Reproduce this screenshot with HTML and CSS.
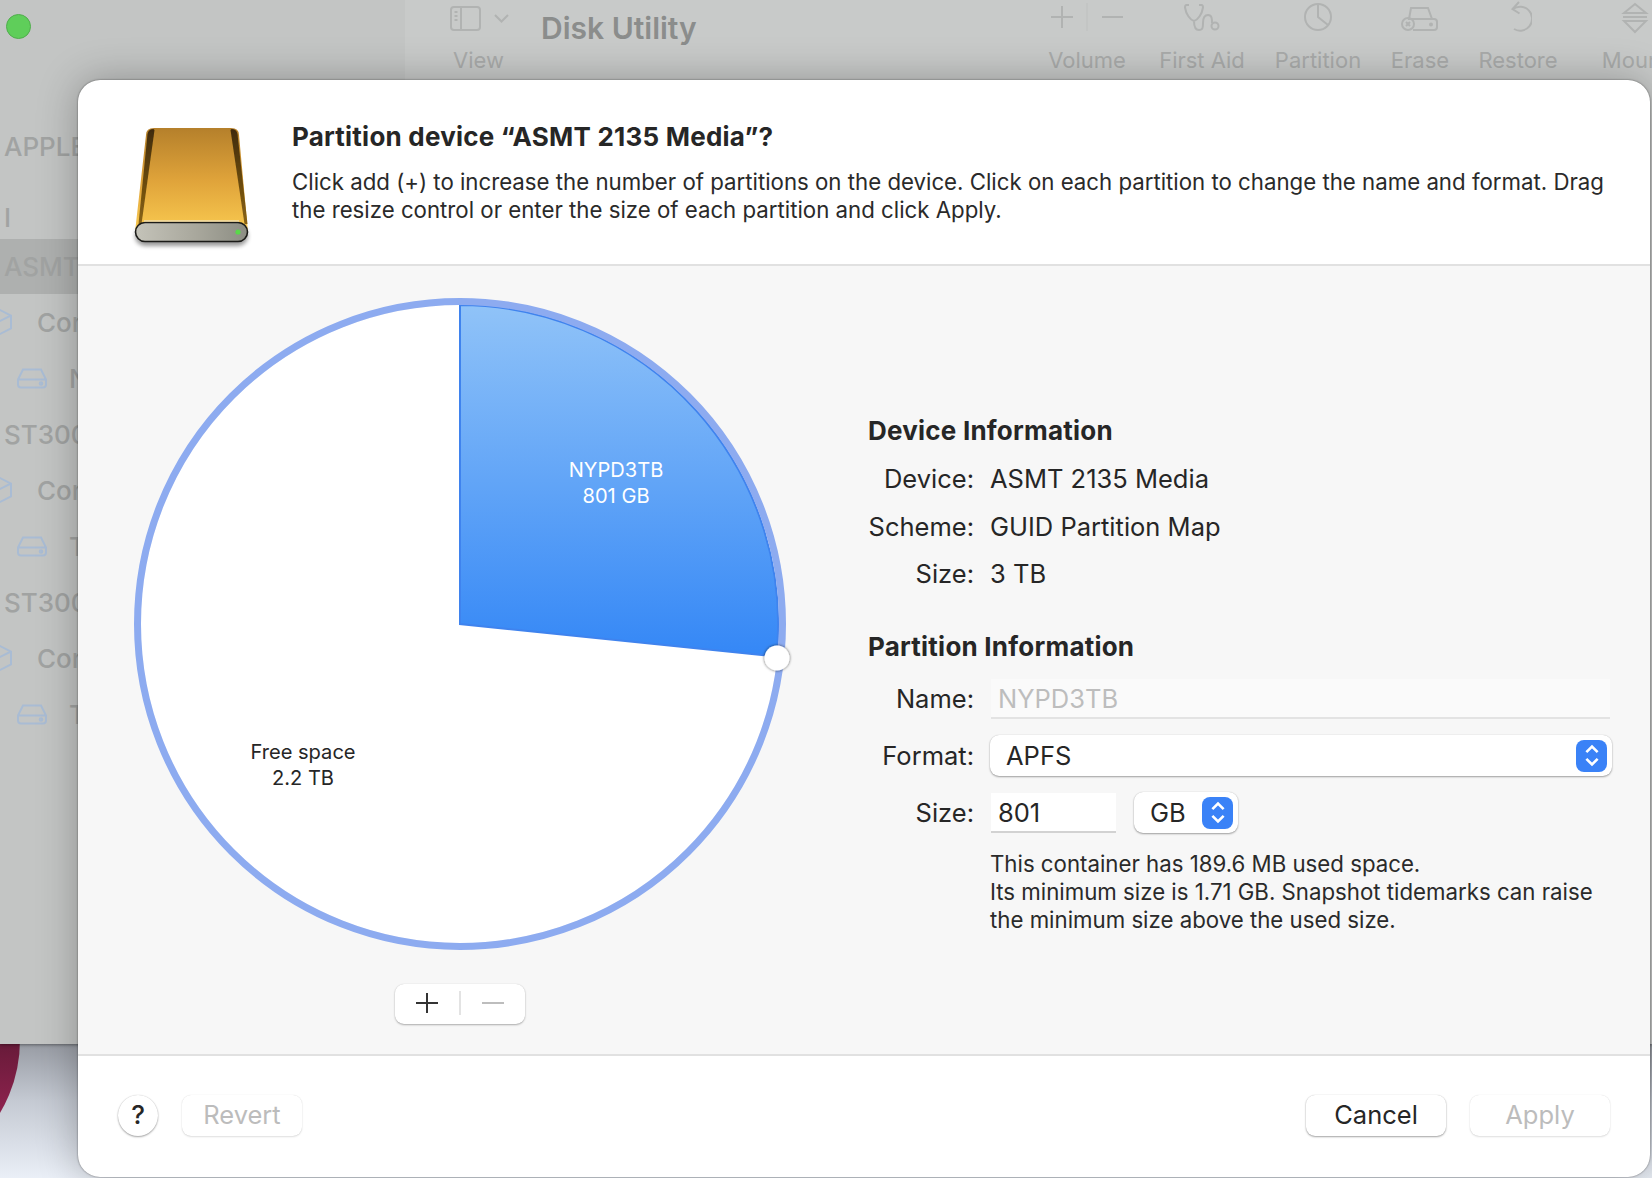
FILE: index.html
```html
<!DOCTYPE html>
<html lang="en">
<head>
<meta charset="utf-8">
<title>Disk Utility</title>
<link rel="stylesheet" href="styles.css">
</head>
<body>
<div class="wallpaper-disc"></div>
<div class="window">
  <aside class="sidebar">
    <div class="traffic"></div>
    <ul class="side-list">
      <li class="side-row side-row-apple">APPLE</li>
      <li class="side-row side-row-i">I</li>
      <li class="side-row side-row-active">ASMT</li>
      <li class="side-row side-con"><svg class="cube" viewBox="0 0 28 28"><path d="M14 1l13 6.500v13L14 27 1 20.500v-13zM1 7.500L14 14l13-6.500M14 14v13"/></svg>Con</li>
      <li class="side-row side-vol"><svg class="disk" viewBox="0 0 30 21"><path d="M6 1.500h18l5 10v5a3 3 0 0 1-3 3H4a3 3 0 0 1-3-3v-5zM1 11.500h28"/><circle cx="24" cy="15.500" r="1.300"/></svg>N</li>
      <li class="side-row">ST300</li>
      <li class="side-row side-con"><svg class="cube" viewBox="0 0 28 28"><path d="M14 1l13 6.500v13L14 27 1 20.500v-13zM1 7.500L14 14l13-6.500M14 14v13"/></svg>Con</li>
      <li class="side-row side-vol"><svg class="disk" viewBox="0 0 30 21"><path d="M6 1.500h18l5 10v5a3 3 0 0 1-3 3H4a3 3 0 0 1-3-3v-5zM1 11.500h28"/><circle cx="24" cy="15.500" r="1.300"/></svg>T</li>
      <li class="side-row">ST300</li>
      <li class="side-row side-con"><svg class="cube" viewBox="0 0 28 28"><path d="M14 1l13 6.500v13L14 27 1 20.500v-13zM1 7.500L14 14l13-6.500M14 14v13"/></svg>Con</li>
      <li class="side-row side-vol"><svg class="disk" viewBox="0 0 30 21"><path d="M6 1.500h18l5 10v5a3 3 0 0 1-3 3H4a3 3 0 0 1-3-3v-5zM1 11.500h28"/><circle cx="24" cy="15.500" r="1.300"/></svg>T</li>
    </ul>
  </aside>
  <header class="toolbar">
    <div class="tool tool-view">
      <svg class="ticon" width="60" height="36" viewBox="0 0 60 36"><rect x="1" y="7" width="29" height="23" rx="3"/><path d="M11 7v23M4.500 12h3M4.500 16h3M4.500 20h3M45 15l6.500 6.500L58 15"/></svg>
      <span class="tool-label">View</span>
    </div>
    <h1 class="app-title">Disk Utility</h1>
    <div class="tool tool-volume">
      <svg class="ticon" width="78" height="36" viewBox="0 0 78 36"><path d="M14 6v22M3 17h22M54 17h21"/><path class="tdivider" d="M39 3v28"/></svg>
      <span class="tool-label">Volume</span>
    </div>
    <div class="tool tool-aid">
      <svg class="ticon" width="38" height="36" viewBox="0 0 38 36"><path d="M6 5H3.500C2 5 2 6.500 2 7.500 3 14 7 20 11 21c4-1 8-7 9-13.500 0-1 0-2.500-1.500-2.500H16M11 21c0 5 1 9 5 9s4-3 4-7 1-8 5-8 4 4 4 8"/><circle cx="32" cy="26" r="3.500"/></svg>
      <span class="tool-label">First Aid</span>
    </div>
    <div class="tool tool-part">
      <svg class="ticon" width="30" height="36" viewBox="0 0 30 36"><circle cx="15" cy="17" r="13"/><path d="M15 4v13l10 8"/></svg>
      <span class="tool-label">Partition</span>
    </div>
    <div class="tool tool-erase">
      <svg class="ticon" width="38" height="36" viewBox="0 0 38 36"><path d="M10 8h17l4 11H8zM8 19h25a3 3 0 0 1 3 3v5a3 3 0 0 1-3 3H12"/><circle cx="7" cy="24" r="6"/><path d="M5 22l4 4M9 22l-4 4"/><circle cx="30" cy="24.500" r="1"/></svg>
      <span class="tool-label">Erase</span>
    </div>
    <div class="tool tool-restore">
      <svg class="ticon" width="28" height="36" viewBox="0 0 28 36"><path d="M9 9a12 12 0 1 1 1 20M15 2L8.500 9l7 4.500"/></svg>
      <span class="tool-label">Restore</span>
    </div>
    <div class="tool tool-mount">
      <svg class="ticon" width="30" height="36" viewBox="0 0 30 36"><path d="M15 4l11 9H4zM3 17h24M15 32l11-11H4z"/></svg>
      <span class="tool-label">Mount</span>
    </div>
  </header>
</div>

<section class="sheet">
  <div class="sheet-head">
    <svg class="drive" width="130" height="130" viewBox="0 0 130 130">
      <defs>
        <linearGradient id="gold" x1="0" y1="0" x2="0" y2="1">
          <stop offset="0" stop-color="#b5802b"/>
          <stop offset="0.5" stop-color="#dfa33a"/>
          <stop offset="1" stop-color="#f9ca50"/>
        </linearGradient>
        <linearGradient id="edgeL" gradientUnits="userSpaceOnUse" x1="0" y1="6" x2="0" y2="105">
          <stop offset="0" stop-color="#3f2a08"/>
          <stop offset="0.6" stop-color="#6e4d10"/>
          <stop offset="1" stop-color="#8a6414"/>
        </linearGradient>
        <linearGradient id="bezel" x1="0" y1="0" x2="1" y2="0">
          <stop offset="0" stop-color="#c4c3b9"/>
          <stop offset="0.55" stop-color="#a8a79c"/>
          <stop offset="1" stop-color="#8c8d83"/>
        </linearGradient>
        <filter id="driveShadow" x="-10%" y="-30%" width="120%" height="180%"><feGaussianBlur stdDeviation="2"/></filter>
        <filter id="edgeBlur" x="-30%" y="-5%" width="160%" height="110%"><feGaussianBlur stdDeviation="0.700"/></filter>
      </defs>
      <rect x="7" y="104" width="113" height="20" rx="10" fill="#000" opacity=".4" filter="url(#driveShadow)"/>
      <path d="M18 13q0-7 8-7h77q8 0 8 7l9 97H7z" fill="url(#gold)"/>
      <path d="M19.500 12q1-5 6-5l1 1-13 94h-3z" fill="url(#edgeL)" filter="url(#edgeBlur)"/>
      <path d="M109.500 12q-1-5-6-5l-1 1 14 94h3z" fill="url(#edgeL)" filter="url(#edgeBlur)"/>
      <rect x="7.500" y="100.500" width="112" height="19" rx="9.500" fill="url(#bezel)" stroke="#1b1b18" stroke-width="1.600"/>
      <path d="M16 99h95" stroke="#f1eee0" stroke-width="1.200"/>
      <circle cx="110" cy="110" r="2.600" fill="#59d84a"/>
    </svg>
    <div class="head-text">
      <h2 class="sheet-title">Partition device “ASMT 2135 Media”?</h2>
      <p class="sheet-desc">Click add (+) to increase the number of partitions on the device. Click on each partition to change the name and format. Drag the resize control or enter the size of each partition and click Apply.</p>
    </div>
  </div>

  <div class="sheet-main">
    <div class="pie-col">
      <svg class="pie" width="670" height="670" viewBox="0 0 670 670">
        <defs>
          <linearGradient id="slice" x1="0" y1="0" x2="0" y2="1">
            <stop offset="0" stop-color="#90c3f8"/>
            <stop offset="1" stop-color="#3487f6"/>
          </linearGradient>
          <filter id="knobShadow" x="-50%" y="-50%" width="200%" height="200%"><feDropShadow dx="0" dy="0" stdDeviation="1.500" flood-color="#000" flood-opacity=".7"/></filter>
        </defs>
        <circle cx="335" cy="335" r="319" fill="#fff"/>
        <path class="slice" d="M335 335V16A319 319 0 0 1 651.500 367.500Z" fill="url(#slice)"/>
        <circle class="ring" cx="335" cy="335" r="322.500"/>
        <circle class="knob" cx="652" cy="369" r="12.500" filter="url(#knobShadow)"/>
        <text class="pie-label pie-label-light" x="491" y="188">NYPD3TB</text>
        <text class="pie-label pie-label-light" x="491" y="214">801 GB</text>
        <text class="pie-label" x="178" y="470">Free space</text>
        <text class="pie-label" x="178" y="496">2.2 TB</text>
      </svg>
      <div class="stepper-group">
        <svg class="glyph" width="22" height="22" viewBox="0 0 22 22"><path d="M11 1v20M0 11h22"/></svg>
        <span class="group-sep"></span>
        <svg class="glyph glyph-off" width="22" height="22" viewBox="0 0 22 22"><path d="M0 11h22"/></svg>
      </div>
    </div>

    <div class="info-col">
      <h3 class="info-head">Device Information</h3>
      <dl class="kv">
        <dt>Device:</dt><dd>ASMT 2135 Media</dd>
        <dt>Scheme:</dt><dd>GUID Partition Map</dd>
        <dt>Size:</dt><dd>3 TB</dd>
      </dl>
      <h3 class="info-head info-head-2">Partition Information</h3>
      <div class="form">
        <label class="form-label">Name:</label>
        <div class="field field-disabled">NYPD3TB</div>
        <label class="form-label">Format:</label>
        <div class="popup popup-wide">APFS
          <span class="updown"><svg width="18" height="27" viewBox="0 0 16 24"><path d="M3 9l5-5 5 5M3 15l5 5 5-5"/></svg></span>
        </div>
        <label class="form-label">Size:</label>
        <div class="size-row">
          <div class="field field-size">801</div>
          <div class="popup popup-unit">GB
            <span class="updown"><svg width="18" height="27" viewBox="0 0 16 24"><path d="M3 9l5-5 5 5M3 15l5 5 5-5"/></svg></span>
          </div>
        </div>
        <p class="note">This container has 189.6 MB used space.<br>Its minimum size is 1.71 GB. Snapshot tidemarks can raise the minimum size above the used size.</p>
      </div>
    </div>
  </div>

  <div class="sheet-foot">
    <button class="help">?</button>
    <button class="btn btn-revert btn-off">Revert</button>
    <span class="foot-spacer"></span>
    <button class="btn btn-wide">Cancel</button>
    <button class="btn btn-wide btn-off">Apply</button>
  </div>
</section>
</body>
</html>
```
FILE: styles.css
```css
* { box-sizing: border-box; }

html, body {
  margin: 0;
  height: 100%;
}

body {
  width: 1652px;
  height: 1178px;
  overflow: hidden;
  position: relative;
  font-family: Inter, "Liberation Sans", sans-serif;
  background: linear-gradient(180deg, #989ca4 0%, #989ca4 88.600%, #c5cad3 93.500%, #eaeff7 100%);
  color: #262626;
}

.wallpaper-disc {
  position: absolute;
  left: -266px;
  top: 897px;
  width: 286px;
  height: 286px;
  border-radius: 50%;
  background: linear-gradient(180deg, #661a38 50%, #952452 80%);
}

/* background window */
.window {
  position: relative;
  width: 1652px;
  height: 1044px;
  display: flex;
  background: #c8cac9;
  box-shadow: 0 1px 3px rgba(0, 0, 0, .4);
  overflow: hidden;
}

.sidebar {
  width: 405px;
  flex: none;
  padding-top: 14px;
  background: #c3c5c4;
  font-size: 26px;
  font-weight: 500;
  color: #a1a3a2;
}

.traffic {
  width: 25px;
  height: 25px;
  margin-left: 6px;
  border-radius: 50%;
  background: #5fce5a;
  border: 1px solid #50ad4c;
}

.side-list {
  list-style: none;
  margin: 0;
  padding: 82px 0 0;
}

.side-row {
  height: 56px;
  padding-left: 4px;
  display: flex;
  align-items: center;
  white-space: nowrap;
}

.side-row-apple { height: 72px; margin-top: -11px; }
.side-row-i { height: 72px; margin-top: -2px; padding-top: 2px; }
.side-row-active { height: 55px; margin-top: -13px; background: #aeb0af; }

.side-con svg { margin-left: -20px; margin-right: 25px; }
.side-vol { padding-left: 17px; }
.side-vol svg { margin-right: 22px; }

.cube, .disk {
  flex: none;
  fill: none;
  stroke: #a9bcd4;
  stroke-width: 2;
}
.cube { width: 28px; height: 28px; }
.disk { width: 30px; height: 21px; }

.toolbar {
  flex: 1;
  height: 80px;
  display: flex;
  align-items: flex-start;
  color: #a9abaa;
  overflow: hidden;
}

.tool {
  flex: none;
  display: flex;
  flex-direction: column;
  align-items: center;
}

.ticon {
  flex: none;
  fill: none;
  stroke: #b1b3b2;
  stroke-width: 2;
  display: block;
}

.tdivider { stroke: #bec0bf; stroke-width: 1; }

.tool-label {
  margin-top: 11px;
  font-size: 22px;
  line-height: 26px;
  white-space: nowrap;
}

.tool-view { width: 60px; margin-left: 45px; align-items: flex-start; }
.tool-view .tool-label { margin-left: 3px; }
.tool-volume { width: 78px; margin-left: 352px; }
.tool-aid { width: 86px; margin-left: 33px; }
.tool-part { width: 88px; margin-left: 29px; }
.tool-erase { width: 60px; margin-left: 28px; }
.tool-restore { width: 80px; margin-left: 28px; }
.tool-mount { width: 70px; margin-left: 42px; }

.app-title {
  flex: none;
  margin: 10px 0 0 31px;
  width: 155px;
  font-size: 30px;
  line-height: 36px;
  font-weight: 600;
  color: #8b8d8c;
  white-space: nowrap;
}

/* sheet */
.sheet {
  position: absolute;
  left: 78px;
  top: 80px;
  width: 1572px;
  height: 1097px;
  border-radius: 22px;
  background: #fff;
  box-shadow: 0 0 2px rgba(0, 0, 0, .55), 0 0 40px rgba(0, 0, 0, .28);
  display: flex;
  flex-direction: column;
  overflow: hidden;
}

.sheet-head {
  flex: none;
  height: 186px;
  padding: 38px 40px 0 50px;
  display: flex;
  align-items: flex-start;
  border-bottom: 2px solid #e1e1e1;
}

.drive { flex: none; margin-right: 34px; margin-top: 4px; margin-left: 0; }

.head-text { flex: 1; padding-top: 1px; }

.sheet-title {
  margin: 0;
  font-size: 26px;
  line-height: 36px;
  font-weight: 700;
  letter-spacing: .22px;
  color: #262626;
}

.sheet-desc {
  margin: 13px 0 0;
  font-size: 22.240px;
  line-height: 28px;
  color: #2a2a2a;
}

.sheet-main {
  flex: none;
  height: 788px;
  background: #f7f7f7;
  display: flex;
}

.pie-col {
  flex: none;
  width: 764px;
  padding-top: 23px;
  display: flex;
  flex-direction: column;
  align-items: center;
}

.pie { flex: none; display: block; }

.ring {
  fill: none;
  stroke: #8dabf0;
  stroke-width: 7;
}

.slice {
  stroke: #3f83ee;
  stroke-width: 2;
}

.knob { fill: #fff; }

.pie-label {
  font-size: 20.100px;
  text-anchor: middle;
  fill: #262626;
}
.pie-label-light { fill: #fff; }

.stepper-group {
  flex: none;
  margin-top: 25px;
  width: 130px;
  height: 40px;
  border-radius: 9px;
  background: #fff;
  box-shadow: 0 1px 2px rgba(0, 0, 0, .3), 0 0 1px rgba(0, 0, 0, .15);
  display: flex;
  align-items: center;
  padding: 0 0 3px 21px;
}

.glyph {
  flex: none;
  fill: none;
  stroke: #333;
  stroke-width: 2;
}
.glyph-off { stroke: #bdbdbd; }

.group-sep {
  flex: none;
  width: 2px;
  height: 24px;
  margin: 0 21px 0 21px;
  background: #e3e3e3;
}

.info-col {
  flex: 1;
  padding: 0 38px 0 26px;
}

.info-head {
  margin: 147px 0 0;
  font-size: 26px;
  line-height: 36px;
  font-weight: 700;
  letter-spacing: .22px;
  color: #262626;
}

.info-head-2 { margin-top: 37px; }

.kv {
  margin: 12px 0 0;
  display: grid;
  grid-template-columns: 106px 1fr;
  column-gap: 16px;
  row-gap: 11.500px;
  font-size: 25.500px;
  line-height: 36px;
}

.kv dt { text-align: right; }
.kv dd { margin: 0; }

.form {
  margin-top: 14px;
  display: grid;
  grid-template-columns: 106px 621px;
  column-gap: 16px;
  font-size: 25.500px;
  line-height: 36px;
}

.form-label { text-align: right; align-self: center; }

.field {
  height: 40px;
  padding: 2px 7px 0;
  background: #fff;
  border-bottom: 2px solid #d2d2d2;
  display: flex;
  align-items: center;
  margin-left: 1px;
}

.field-disabled {
  width: 619px;
  background: #fafafa;
  border-bottom-color: #e3e3e3;
  color: #bdbdbd;
}

.field-size { width: 125px; }

.popup {
  height: 41px;
  background: #fff;
  border-radius: 9px;
  box-shadow: 0 1px 2px rgba(0, 0, 0, .35), 0 0 1px rgba(0, 0, 0, .2);
  display: flex;
  align-items: center;
  justify-content: space-between;
  padding: 0 5px 0 16px;
}

.popup-wide { margin: 16px 0 16px; width: 622px; }

.size-row {
  display: flex;
  align-items: center;
  gap: 18px;
}

.popup-unit { width: 104px; }

.updown {
  flex: none;
  width: 31px;
  height: 32px;
  border-radius: 8px;
  background: #3a82f7;
  display: flex;
  align-items: center;
  justify-content: center;
}

.updown svg {
  fill: none;
  stroke: #fff;
  stroke-width: 2.300;
}

.note {
  grid-column: 2;
  margin: 17px 0 0;
  font-size: 22.240px;
  line-height: 28px;
  color: #2a2a2a;
}

.sheet-foot {
  flex: 1;
  border-top: 2px solid #e1e1e1;
  display: flex;
  align-items: center;
  padding: 0 40px 2px 40px;
}

.foot-spacer { flex: 1; }

button {
  font-family: inherit;
  border: 0;
  padding: 0 0 2px;
  background: #fff;
  color: #262626;
}

.help {
  width: 40px;
  height: 41px;
  border-radius: 50%;
  font-size: 26px;
  font-weight: 500;
  box-shadow: 0 1px 2px rgba(0, 0, 0, .35), 0 0 1px rgba(0, 0, 0, .2);
}

.btn {
  height: 41px;
  border-radius: 9px;
  font-size: 25.500px;
  box-shadow: 0 1px 2px rgba(0, 0, 0, .35), 0 0 1px rgba(0, 0, 0, .2);
}

.btn-off {
  color: #bcbcbc;
  box-shadow: 0 1px 2px rgba(0, 0, 0, .12), 0 0 1px rgba(0, 0, 0, .15);
}

.btn-revert { width: 120px; margin-left: 24px; }
.btn-wide { width: 140px; margin-left: 24px; }
```
